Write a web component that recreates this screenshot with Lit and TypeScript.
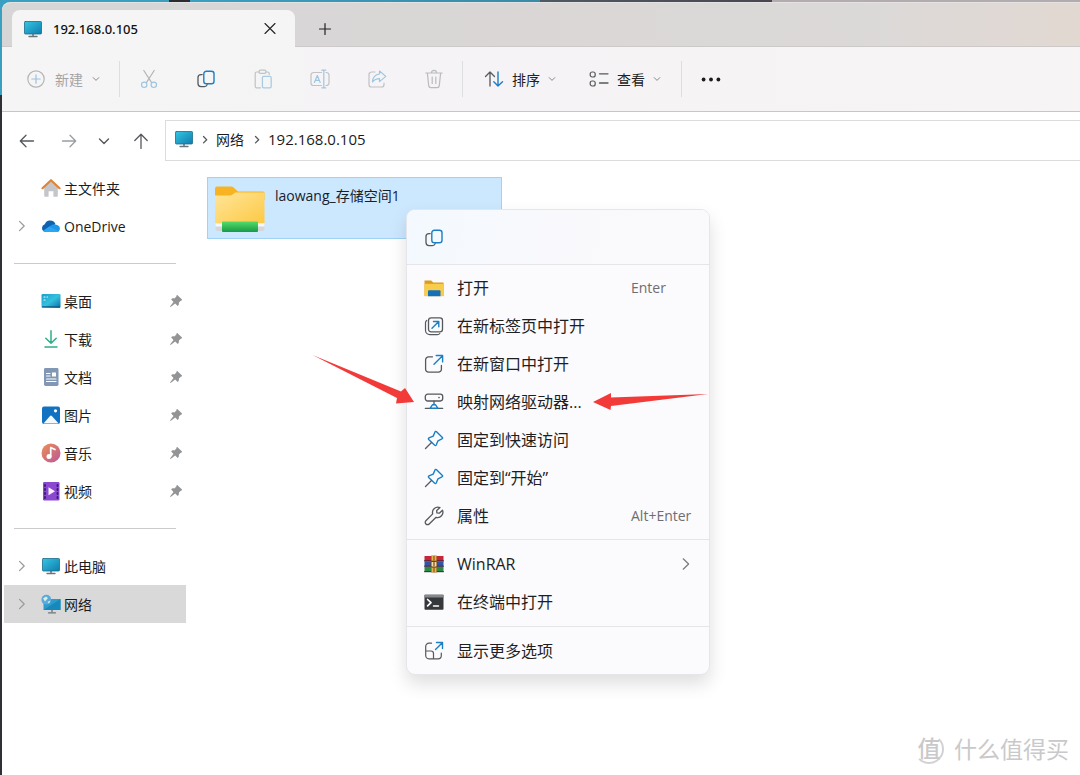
import { LitElement, html, css, svg, nothing } from "lit";
import { customElement } from "lit/decorators.js";

const frame = (w: number, h: number, body: unknown, box = `0 0 ${w} ${h}`) =>
  html`<svg width=${w} height=${h} viewBox=${box} fill="none" stroke-linecap="round" stroke-linejoin="round" aria-hidden="true">${body}</svg>`;

const GREY = "#55585c";
const BLUE = "#1c7fc4";

const monitor = (w = 20) =>
  frame(w, w, svg`
    <defs><linearGradient id="m" x1="0" y1="0" x2="1" y2="1"><stop offset="0" stop-color="#35c6e2"/><stop offset="1" stop-color="#0f7cae"/></linearGradient></defs>
    <path d="M9 15h2v2H9z" fill="#8d9499"/><path d="M6 17.5h8" stroke="#6c747a" stroke-width="1.4"/>
    <rect x="1.5" y="2.5" width="17" height="12.5" rx=".8" fill="url(#m)" stroke="#1b6d8c" stroke-width=".8"/>`, "0 0 20 20");

const copyIcon = frame(20, 20, svg`
  <path d="M6.2 5.6H5A3 3 0 0 0 2 8.6v6A3 3 0 0 0 5 17.600h3.400a3 3 0 0 0 2.800-2" stroke="${GREY}" stroke-width="1.300"/>
  <rect x="7.800" y="2.200" width="10.200" height="12.600" rx="2.600" stroke="${BLUE}" stroke-width="1.400"/>`);

const icons = {
  plusCircle: frame(20, 20, svg`<circle cx="10" cy="10" r="8.200" stroke="#b3b5b8" stroke-width="1.200"/><path d="M10 5.800v8.400M5.800 10h8.400" stroke="#9dc0dc" stroke-width="1.200"/>`),
  cut: frame(20, 20, svg`<path d="M4.800 1.500 12.600 13.600M15.200 1.500 7.400 13.600" stroke="#b3b5b8" stroke-width="1.200"/><circle cx="5.200" cy="15.800" r="2.700" stroke="#9dc6e2" stroke-width="1.200"/><circle cx="14.800" cy="15.800" r="2.700" stroke="#9dc6e2" stroke-width="1.200"/>`),
  paste: frame(20, 20, svg`<path d="M6.500 3H3.600A1.400 1.400 0 0 0 2.200 4.400v13A1.400 1.400 0 0 0 3.600 18.800H7.500M12.500 3h2.300a1.400 1.400 0 0 1 1.400 1.400v1" stroke="#c0c2c5" stroke-width="1.200"/><rect x="6" y="1.200" width="7" height="3.200" rx="1.400" stroke="#c0c2c5" stroke-width="1.200"/><rect x="9.400" y="7.400" width="8.800" height="11.400" rx="1.400" stroke="#a9cce5" stroke-width="1.300"/>`),
  rename: frame(20, 20, svg`<path d="M11.500 3.500H3.600A2.600 2.600 0 0 0 1 6.100v7.800a2.600 2.600 0 0 0 2.600 2.600h7.900M16 3.500h.400A2.600 2.600 0 0 1 19 6.100v7.800a2.600 2.600 0 0 1-2.600 2.600H16" stroke="#c0c2c5" stroke-width="1.200"/><path d="M4.400 13.500 7.300 6.500l2.900 7M5.400 11.300h3.800M13.800 1.500v17M11.800 1.200h4M11.800 18.800h4" stroke="#9dc6e2" stroke-width="1.200"/>`),
  share: frame(20, 20, svg`<path d="M8 3H4.600A2.600 2.600 0 0 0 2 5.600v9.800A2.600 2.600 0 0 0 4.600 18h9.800a2.600 2.600 0 0 0 2.600-2.600V14" stroke="#c0c2c5" stroke-width="1.200"/><path d="M12.500 2 18.800 7.400l-6.300 5.200V9.700c-3 0-5 .8-7 3.300.3-4.400 2.800-7.600 7-8Z" stroke="#9dc6e2" stroke-width="1.200"/>`),
  trash: frame(20, 20, svg`<path d="M1.800 4h16.400M7.500 3.800a2.500 2.500 0 0 1 5 0M3.400 4.200 4.700 16.600A2.200 2.200 0 0 0 6.900 18.600h6.200a2.200 2.200 0 0 0 2.200-2L16.600 4.200M8.200 8v6.500M11.800 8v6.500" stroke="#b9bbbe" stroke-width="1.200"/>`),
  sort: frame(20, 20, svg`<path d="M6 17V3M1.500 7.500 6 3l4.500 4.500" stroke="${GREY}" stroke-width="1.300"/><path d="M14 3v14M9.800 12.700 14 17l4.500-4.300" stroke="${BLUE}" stroke-width="1.400"/>`),
  view: frame(20, 20, svg`<rect x="1.200" y="3" width="5" height="5" rx="2" stroke="${GREY}" stroke-width="1.200"/><rect x="1.200" y="12" width="5" height="5" rx="2" stroke="${GREY}" stroke-width="1.200"/><path d="M10.500 4.800h8.500M10.500 14h8.500" stroke="${GREY}" stroke-width="1.300"/>`),
  more: frame(20, 20, svg`<g fill="#1b1b1b"><circle cx="2.600" cy="10.500" r="1.900"/><circle cx="10" cy="10.500" r="1.900"/><circle cx="17.400" cy="10.500" r="1.900"/></g>`),
  close: frame(12, 12, svg`<path d="M1 .500l10 10M11 .500l-10 10" stroke="#222" stroke-width="1.100"/>`),
  plus: frame(14, 14, svg`<path d="M7 1.500v11M1.500 7h11" stroke="#222" stroke-width="1.200"/>`),
  down: frame(8, 8, svg`<path d="M1.200 2.600 4 5.400 6.800 2.600" stroke="#85888c"/>`),
  back: frame(16, 16, svg`<path d="M14.500 8H1.500M7 2.200 1.300 8 7 13.800" stroke="#55585c" stroke-width="1.300"/>`),
  forward: frame(16, 16, svg`<path d="M1.500 8h13M9 2.200 14.700 8 9 13.800" stroke="#9b9ea1" stroke-width="1.300"/>`),
  recent: frame(12, 12, svg`<path d="M1.500 4 6 8.500 10.500 4" stroke="#55585c" stroke-width="1.400"/>`),
  up: frame(16, 16, svg`<path d="M8 15.500V1.300M1.800 7.500 8 1.200l6.200 6.300" stroke="#55585c" stroke-width="1.300"/>`),
  crumb: frame(6, 10, svg`<path d="M1.500 2.500 4.700 5.700 1.500 8.900" stroke="#55585c" stroke-width="1.300"/>`),
  expand: frame(8, 12, svg`<path d="M1.500 1.300 6.200 6 1.500 10.700" stroke="#97999c" stroke-width="1.200"/>`),
  submenu: frame(8, 14, svg`<path d="M1.200 1.800 6.600 7 1.200 12.200" stroke="#77797c" stroke-width="1.200"/>`),
  pin: frame(14, 14, svg`<path d="M8.300 1 13 5.500c.300.500-.200 1.100-.900 1L9.900 8.600c.200 1.700-.300 3-1.200 3.300L6.200 9.500 1.600 13 1 12.500 4.500 7.900 2.200 5.600c.300-1 1.600-1.400 3.300-1.200L7.500 2.200c-.100-.700.300-1.300.800-1.200Z" fill="#929496"/>`),
};

const side = {
  home: frame(20, 20, svg`<path d="M3.200 9 10 3l6.800 6v9a.800.800 0 0 1-.8.800h-3.600v-5.600H7.600v5.600H4a.800.800 0 0 1-.8-.8Z" fill="#c5c6ca"/><path d="M1.500 10.200 10 2.200l8.500 8" stroke="#e08434" stroke-width="2.200"/>`),
  cloud: frame(20, 20, svg`<path d="M3 15.600a4 4 0 0 1 .8-7.300A5.800 5.800 0 0 1 14.300 7.500L12 12Z" fill="#0f62b0"/><path d="M4.800 16a3.500 3.500 0 0 1-2.600-1.300L11 8.800a4.800 4.800 0 0 1 5 .2 3.600 3.600 0 0 1 .2 7Z" fill="#1f96e6"/><path d="M2.200 14.700 8.400 10.600 17.900 15.200a3.600 3.600 0 0 1-1.700.8H4.800a3.500 3.500 0 0 1-2.600-1.300Z" fill="#2aa7f0"/>`),
  desktop: frame(20, 20, svg`<defs><linearGradient id="d" x1="0" y1="0" x2="1" y2="1"><stop offset="0" stop-color="#1a9fc9"/><stop offset=".5" stop-color="#35c0de"/><stop offset="1" stop-color="#0a6ea6"/></linearGradient></defs><rect x=".500" y="3" width="19" height="14" rx="1.200" fill="url(#d)"/><path d="M3 6h1M3 9h1M6 6h.500" stroke="#e3f9ff" stroke-width="1.200"/><path d="M1.500 15.800h17" stroke="#0c5b86"/>`),
  download: frame(20, 20, svg`<path d="M10 1.800v12M4.800 9.200 10 14.300l5.200-5.100M4 18h12" stroke="#2eae86" stroke-width="1.500"/>`),
  doc: frame(20, 20, svg`<rect x="3" y="1" width="14.500" height="18" rx="1.400" fill="#8297b3"/><path d="M5.500 6.500h3.500M5.500 9h3.500M5.500 12h9.500M5.500 14.500h9.500" stroke="#fff" stroke-width="1.100"/><rect x="11" y="5.500" width="4" height="4" fill="#fff"/>`),
  picture: frame(20, 20, svg`<rect x="1" y="1.500" width="18" height="17.500" rx="2" fill="#1272c2"/><path d="M2.500 18.500 8.800 11.200a1.500 1.500 0 0 1 2.300 0l6.500 7.300Z" fill="#f2f9ff"/><circle cx="14.500" cy="5.800" r="1.600" fill="#fff"/>`),
  music: frame(20, 20, svg`<defs><linearGradient id="u" x1="0" y1="0" x2="1" y2="1"><stop offset="0" stop-color="#ee8f55"/><stop offset="1" stop-color="#b9569b"/></linearGradient></defs><circle cx="10" cy="10" r="9.500" fill="url(#u)"/><circle cx="8" cy="13.600" r="2.500" fill="#fff"/><path d="M9.700 13.600V4.500l4.300 2" stroke="#fff" stroke-width="1.700"/>`),
  video: frame(20, 20, svg`<rect x="2" y="1" width="16.500" height="18.500" rx="1.200" fill="#8a49cf"/><path d="M4 4v13.500M16.500 4v13.500" stroke="#3c1772" stroke-width="1.800" stroke-dasharray="1 3"/><path d="M7.500 6.200 14 10.200 7.500 14.200Z" fill="#fbf2ff"/>`),
  network: frame(20, 20, svg`<path d="M10 16h2v2h-2z" fill="#8d9499"/><path d="M7.500 18.800h7" stroke="#6c747a" stroke-width="1.300"/><path d="M2.500 5h17v11h-17Z" fill="#2b9ccb"/><path d="M2.500 16 19.500 5v11Z" fill="#1688ba"/><circle cx="5.300" cy="5.700" r="4.900" fill="#5aa9da"/><path d="M2 4.500 5 2.500l2 1.500L4 7.500ZM6.500 8 9.500 6.500 8 9.500Z" fill="#d7efe2"/>`),
};

const arrowPin = frame(20, 20, svg`<path d="M12.300 1.600 18.400 7.500c.5.600.2 1.200-.5 1.400L14 10.800 12.200 15c-.4.700-.9.800-1.500.3L4.700 9.400c-.5-.6-.4-1.200.3-1.500L9.200 6.100 11 2c.3-.7.800-.8 1.300-.4Z" stroke="${BLUE}" stroke-width="1.400"/><path d="M7.500 12.500 1.500 18.500" stroke="${GREY}" stroke-width="1.300"/>`);

const act = {
  folder: frame(20, 20, svg`<path d="M.5 2.500h6.700l2 2H19a.600.600 0 0 1 .6.600V18H.5Z" fill="#dc9a1e"/><path d="M.5 5.800h19.100v12.400H.5Z" fill="#f9cd4c"/><path d="M4 13.200a1 1 0 0 1 1-1h10.500a1 1 0 0 1 1 1v5H4Z" fill="#1670b8"/>`),
  tab: frame(20, 20, svg`<rect x="4.500" y="1.800" width="14" height="14" rx="2.600" stroke="${GREY}" stroke-width="1.300"/><path d="M2.700 4.400a3 3 0 0 0-1.200 2.400v7.500a4.400 4.400 0 0 0 4.400 4.400h7.500a3 3 0 0 0 2.400-1.200" stroke="${GREY}" stroke-width="1.200"/><path d="M8 12.300 14.500 5.800M9.500 5.500h5.300v5.300" stroke="${BLUE}" stroke-width="1.400"/>`),
  window: frame(20, 20, svg`<path d="M8.500 2.800H4.600A3 3 0 0 0 1.600 5.800v9.400a3 3 0 0 0 3 3h9.800a3 3 0 0 0 3-3V11.500" stroke="${GREY}" stroke-width="1.300"/><path d="M10 10.200 18.500 1.700M12.200 1.500h6.400v6.400" stroke="${BLUE}" stroke-width="1.400"/>`),
  drive: frame(20, 20, svg`<rect x="1.300" y="2.200" width="17.400" height="6.800" rx="2.400" stroke="${GREY}" stroke-width="1.300"/><circle cx="15" cy="5.600" r=".8" fill="${GREY}"/><path d="M10 9.200v3.300M1.300 16.300h4.500M14.200 16.300h4.500" stroke="${GREY}" stroke-width="1.300"/><path d="M8.400 12.800h3.200l2.400 3.500H6Z" stroke="${BLUE}" stroke-width="1.400"/>`),
  wrench: frame(20, 20, svg`<path d="M16 1.600a5.300 5.300 0 0 0-7.300 6.300L1.900 14.700a2.300 2.300 0 0 0 3.300 3.300l6.900-6.700a5.300 5.300 0 0 0 6.400-7.100L15.300 7.200 12.900 6.900 12.700 4.600Z" stroke="${GREY}" stroke-width="1.300"/>`),
  rar: frame(20, 20, svg`<path d="M.5 2h19v5.300H.5Z" fill="#c4273a"/><path d="M.5 7.300h19v5.300H.5Z" fill="#3551a8"/><path d="M.5 12.600h19V18H.5Z" fill="#2b8b45"/><path d="M.5 6.800h19M.5 12.200h19M.5 17.700h19" stroke="#40283a" stroke-width="1"/><path d="M7.300 1.500h5.400v17H7.300Z" fill="#b5792c"/><path d="M8.300 2v4M11.700 2v4M8.300 14v4M11.700 14v4" stroke="#edc65a"/><rect x="7" y="7.500" width="6" height="5.500" rx="1" fill="#f5dfa0" stroke="#6d421d"/><path d="M10 8.500v3" stroke="#7b4020" stroke-width="1.200"/>`),
  terminal: frame(20, 20, svg`<rect x=".5" y="2.700" width="19" height="15" rx=".8" fill="#35373b"/><path d="M.5 2.700h19v2.800H.5Z" fill="#85888c"/><path d="M3.600 7.500 7 10.700 3.600 13.900" stroke="#fff" stroke-width="1.700"/><path d="M9.500 14h5" stroke="#fff" stroke-width="1.500"/>`),
  options: frame(20, 20, svg`<path d="M7.500 2.200H5A3.300 3.300 0 0 0 1.700 5.500v9A3.300 3.300 0 0 0 5 17.800h9a3.300 3.300 0 0 0 3.300-3.300V12M1.700 10H7a2.500 2.500 0 0 1 2.500 2.500v5.300" stroke="${GREY}" stroke-width="1.200"/><path d="M11.500 8.500 18.300 1.700M12.500 1.500h6v6" stroke="${BLUE}" stroke-width="1.400"/>`),
};

type Place = { icon: unknown; name: string; pinned?: boolean; expands?: boolean; current?: boolean };
const places: Place[][] = [
  [{ icon: side.home, name: "主文件夹" }, { icon: side.cloud, name: "OneDrive", expands: true }],
  [
    { icon: side.desktop, name: "桌面", pinned: true },
    { icon: side.download, name: "下载", pinned: true },
    { icon: side.doc, name: "文档", pinned: true },
    { icon: side.picture, name: "图片", pinned: true },
    { icon: side.music, name: "音乐", pinned: true },
    { icon: side.video, name: "视频", pinned: true },
  ],
  [
    { icon: monitor(), name: "此电脑", expands: true },
    { icon: side.network, name: "网络", expands: true, current: true },
  ],
];

type Action = { icon: unknown; label: string; keys?: string; more?: boolean };
const actions: Action[][] = [
  [
    { icon: act.folder, label: "打开", keys: "Enter" },
    { icon: act.tab, label: "在新标签页中打开" },
    { icon: act.window, label: "在新窗口中打开" },
    { icon: act.drive, label: "映射网络驱动器..." },
    { icon: arrowPin, label: "固定到快速访问" },
    { icon: arrowPin, label: "固定到“开始”" },
    { icon: act.wrench, label: "属性", keys: "Alt+Enter" },
  ],
  [
    { icon: act.rar, label: "WinRAR", more: true },
    { icon: act.terminal, label: "在终端中打开" },
  ],
  [{ icon: act.options, label: "显示更多选项" }],
];

const controls = css`
  * { box-sizing: border-box; }
  button { font: inherit; color: inherit; background: none; border: 0; padding: 0; margin: 0; text-align: left; display: flex; align-items: center; }
  a { color: inherit; text-decoration: none; }
  svg { display: block; flex: none; }
`;

@customElement("title-tabs")
class TitleTabs extends LitElement {
  static styles = [controls, css`
    :host { display: flex; height: 44px; padding: 7px 0 0 10px; background: linear-gradient(90deg, #d6d6d6, #dad6d6 45%, #dbd9d8 80%, #e2d8d2); box-shadow: inset 0 -1px #cdc9c9; border-top-left-radius: 8px; }
    .tab { display: flex; align-items: center; gap: 10px; width: 283px; padding: 0 19px 0 11px; border-radius: 8px 8px 0 0; background: #f6f5f6; font-family: "Noto Sans", "Open Sans", sans-serif; font-size: 13px; font-weight: 500; color: #111; }
    .name { flex: 1; }
    .new { width: 60px; justify-content: center; }
  `];
  render() {
    return html`
      <div class="tab">${monitor()}<span class="name">192.168.0.105</span><button aria-label="关闭">${icons.close}</button></div>
      <button class="new" aria-label="新标签页">${icons.plus}</button>`;
  }
}

@customElement("command-bar")
class CommandBar extends LitElement {
  static styles = [controls, css`
    :host { display: flex; align-items: center; height: 65px; background: linear-gradient(90deg, #f6f5f6, #f5f3f5 50%, #f6f4f4); border-bottom: 1px solid #c5c5ca; color: #222; font-size: 14px; }
    .menu { height: 40px; gap: 8px; }
    .create { padding: 0 19px 0 24px; gap: 9px; color: #a3a4a6; }
    .icon { width: 57px; height: 40px; justify-content: center; }
    .rule { width: 1px; height: 36px; background: #dedee0; }
    .sort { padding: 0 33px 0 21px; }
    .view { padding-right: 20px; }
  `];
  render() {
    const tools: [string, unknown][] = [["剪切", icons.cut], ["复制", copyIcon], ["粘贴", icons.paste], ["重命名", icons.rename], ["共享", icons.share], ["删除", icons.trash]];
    return html`
      <button class="menu create">${icons.plusCircle}<span>新建</span>${icons.down}</button>
      <span class="rule"></span>
      ${tools.map(([name, icon]) => html`<button class="icon" aria-label=${name}>${icon}</button>`)}
      <span class="rule"></span>
      <button class="menu sort">${icons.sort}<span>排序</span>${icons.down}</button>
      <button class="menu view">${icons.view}<span>查看</span>${icons.down}</button>
      <span class="rule"></span>
      <button class="icon" aria-label="更多">${icons.more}</button>`;
  }
}

@customElement("address-row")
class AddressRow extends LitElement {
  static styles = [controls, css`
    :host { display: flex; align-items: center; padding-top: 8px; }
    .nav { display: grid; grid-template-columns: 42px 37px 35px 1fr; align-items: center; width: 163px; padding-left: 17px; }
    .path { flex: 1; display: flex; align-items: center; gap: 8px; height: 41px; padding: 0 0 3px 8px; border: 1px solid #dcdcdc; border-right: 0; font-size: 15px; color: #1b1b1b; }
    .cjk { font-size: 14px; padding-right: 2px; }
  `];
  render() {
    return html`
      <div class="nav">
        <button aria-label="后退">${icons.back}</button><button aria-label="前进">${icons.forward}</button>
        <button aria-label="最近">${icons.recent}</button><button aria-label="向上">${icons.up}</button>
      </div>
      <nav class="path" aria-label="路径">${monitor()}${icons.crumb}<a class="cjk" href="#net">网络</a>${icons.crumb}<a href="#host">192.168.0.105</a></nav>`;
  }
}

@customElement("side-nav")
class SideNav extends LitElement {
  static styles = [controls, css`
    :host { display: block; width: 184px; flex: none; padding: 8px 0 0 2px; font-size: 14px; color: #1b1b1b; }
    .row { display: flex; align-items: center; height: 38px; padding: 0 3px 0 14px; }
    .row.current { background: #d9d9d9; }
    .twist { width: 23px; flex: none; }
    .name { flex: 1; padding-left: 3px; }
    .line { height: 1px; margin: 18px 10px; background: #cbcbcb; }
  `];
  render() {
    return html`<nav aria-label="导航窗格">${places.map((group, i) => html`
      ${i ? html`<div class="line"></div>` : nothing}
      ${group.map((p) => html`<a class="row ${p.current ? "current" : ""}" href="#place">
        <span class="twist">${p.expands ? icons.expand : nothing}</span>${p.icon}<span class="name">${p.name}</span>${p.pinned ? icons.pin : nothing}</a>`)}`)}</nav>`;
  }
}

@customElement("file-tile")
class FileTile extends LitElement {
  static styles = [controls, css`
    :host { display: block; width: 295px; }
    .tile { width: 100%; height: 62px; padding: 4px 6px; gap: 9px; align-items: flex-start; background: #cce8ff; border: 1px solid #a0d2f5; color: #16212b; font-size: 14px; line-height: 20px; }
    .name { padding-top: 4px; }
  `];
  render() {
    return html`<button class="tile">
      ${frame(52, 52, svg`
        <defs>
          <linearGradient id="f" x1="0" y1="0" x2="1" y2="1"><stop offset="0" stop-color="#ffe59a"/><stop offset="1" stop-color="#fdc944"/></linearGradient>
          <linearGradient id="g" x1="0" y1="0" x2="0" y2="1"><stop offset="0" stop-color="#53dc69"/><stop offset="1" stop-color="#169a47"/></linearGradient>
        </defs>
        <path d="M1 6.500A2 2 0 0 1 3 4.500H17a4 4 0 0 1 2.600 1L24 9.500H49a1.500 1.500 0 0 1 1.500 1.500V18H1Z" fill="#f8b323"/>
        <path d="M1 13.500H16a4 4 0 0 0 2.600-1L21.500 10.500H50.500V41H1Z" fill="url(#f)"/>
        <path d="M1.500 41.500H50.500V47a2 2 0 0 1-2 2H3.500a2 2 0 0 1-2-2Z" fill="#d4d7da"/>
        <path d="M1.500 41.500H50.500v3H1.500Z" fill="#f5f6f7"/>
        <rect x="8" y="39.500" width="36" height="10.500" rx="1" fill="url(#g)"/>`)}
      <span class="name">laowang_存储空间1</span></button>`;
  }
}

@customElement("context-menu")
class ContextMenu extends LitElement {
  static styles = [controls, css`
    :host { display: block; width: 304px; padding-bottom: 4px; border: 1px solid #e6e5ea; border-radius: 9px; background: #fbfafd; box-shadow: 0 9px 18px rgba(0, 0, 0, .13); color: #1f1f22; font-size: 16px; line-height: 24px; }
    .quick { height: 55px; padding: 2px 17px 0; display: flex; align-items: center; border-bottom: 1px solid #e5e5e9; border-radius: 8px 8px 0 0; background: linear-gradient(100deg, #f3f9fe, #f9f9fd 45%, #faf9fc); }
    .group { padding: 5px 0; border-bottom: 1px solid #e5e5e9; }
    .first { padding: 4px 0; }
    .group:last-child { border: 0; padding-bottom: 0; }
    .item { width: 100%; height: 38px; padding: 0 17px; gap: 13px; }
    .label { flex: 1; }
    .keys { width: 61px; font-size: 14px; color: #6e6e72; white-space: nowrap; }
    .item svg:last-child { margin-right: 2px; }
  `];
  render() {
    return html`
      <div class="quick"><button aria-label="复制">${copyIcon}</button></div>
      ${actions.map((group, i) => html`<div class="group ${i ? "" : "first"}">${group.map((a) => html`
        <button class="item">${a.icon}<span class="label">${a.label}</span>${a.keys ? html`<span class="keys">${a.keys}</span>` : nothing}${a.more ? icons.submenu : nothing}</button>`)}</div>`)}`;
  }
}

@customElement("app-root")
class AppRoot extends LitElement {
  static styles = [controls, css`
    :host {
      display: flex; box-sizing: border-box; position: relative; min-height: 100vh; overflow: hidden; padding: 3px 0 0 2px;
      font-family: "Open Sans", "Noto Sans CJK SC", sans-serif;
      background:
        linear-gradient(90deg, #3a9fc0 169px, #2c2b30 169px, #2c2b30 190px, #3a9fc0 190px, #3a8ba8 540px, #4f5a64 540px, #4a4650 772px, #b3abad 772px) top / 100% 2px no-repeat,
        linear-gradient(#3a9fc0 95px, #2e3036 95px);
    }
    .window { flex: 1; min-width: 0; display: flex; flex-direction: column; background: #fff; border-top-left-radius: 8px; box-shadow: 0 -1px #e3e3e4; }
    .body { flex: 1; display: flex; }
    .files { flex: 1; padding: 16px 20px 16px 21px; }
    .popup { position: absolute; left: 406px; top: 209px; }
    .arrows { position: absolute; left: 310px; top: 350px; }
    .mark { position: absolute; right: 11px; bottom: 10px; display: flex; align-items: center; gap: 10px; color: #c9c9cb; font-size: 23px; line-height: 32px; }
    .badge { width: 30px; height: 30px; border: 2px solid #d2d2d4; border-left-color: transparent; border-top-color: transparent; border-radius: 50%; line-height: 24px; display: flex; justify-content: center; font-weight: 500; }
  `];
  render() {
    return html`
      <main class="window">
        <title-tabs></title-tabs>
        <command-bar></command-bar>
        <address-row></address-row>
        <div class="body"><side-nav></side-nav><section class="files"><file-tile></file-tile></section></div>
      </main>
      <context-menu class="popup"></context-menu>
      <svg class="arrows" width="400" height="70" viewBox="0 0 400 70" aria-hidden="true">
        <path d="M2.500 5 91 41.500 95 38 104 52 86 53.500 87 48Z" fill="#f23a38"/>
        <path d="M283 52 301 43 301 47.500 398 44 301 56 300.500 60Z" fill="#f23a38"/>
      </svg>
      <div class="mark"><span class="badge">值</span><span>什么值得买</span></div>`;
  }
}
